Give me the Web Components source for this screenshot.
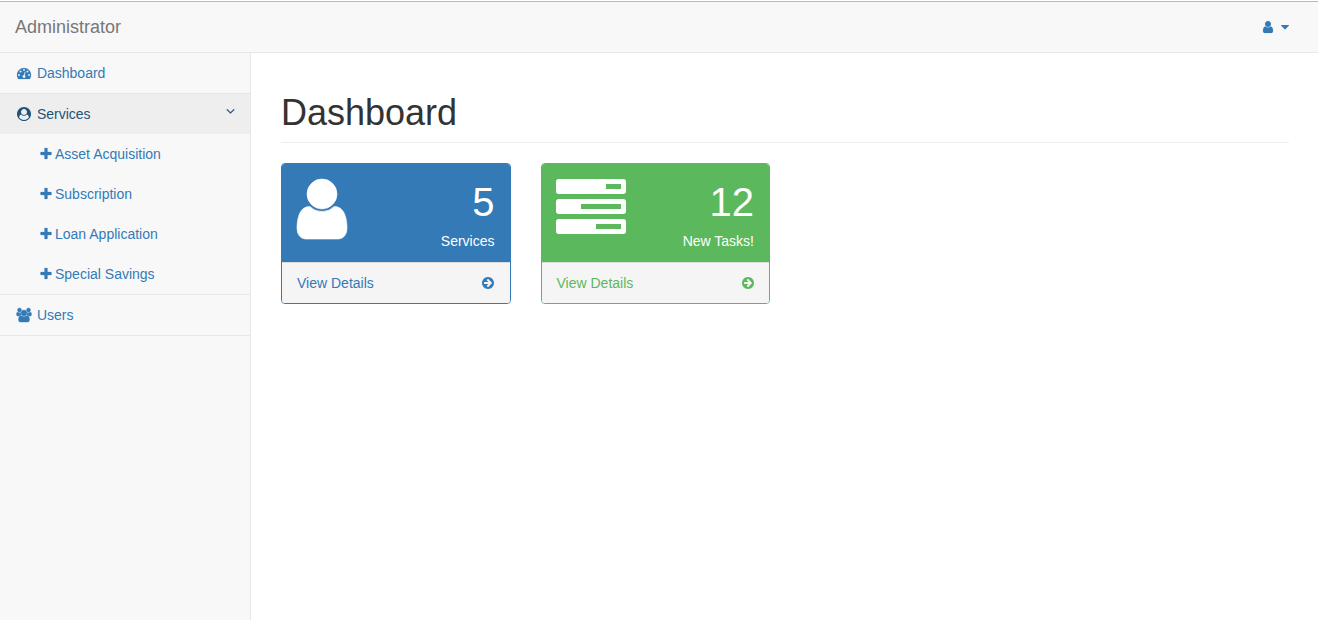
<!DOCTYPE html>
<html lang="en">
<head>
<meta charset="utf-8">
<title>Dashboard</title>
<style>
html,body{height:100%}
body{margin:0;background:#fff;color:#333;font:14px/1.42857143 "Liberation Sans",Arial,sans-serif;overflow:hidden}
</style>
</head>
<body>
<admin-app>
  <top-bar slot="top">Administrator</top-bar>
  <side-nav slot="side">
    <nav-item icon="dashboard">Dashboard</nav-item>
    <nav-item icon="usercircle" open>Services
      <nav-sub slot="children">Asset Acquisition</nav-sub>
      <nav-sub slot="children">Subscription</nav-sub>
      <nav-sub slot="children">Loan Application</nav-sub>
      <nav-sub slot="children">Special Savings</nav-sub>
    </nav-item>
    <nav-item icon="users">Users</nav-item>
  </side-nav>
  <page-header>Dashboard</page-header>
  <card-row>
    <stat-card icon="user" value="5" style="--c:#337ab7">Services</stat-card>
    <stat-card icon="tasks" value="12" style="--c:#5cb85c">New Tasks!</stat-card>
  </card-row>
</admin-app>
<script>
// Each icon: [left, width, path, extra stroke] on a 1792-unit-high grid.
const ICONS = {
  user:[256,1280,'M1536 1399q0 109-62.5 187t-150.5 78h-854q-88 0-150.5-78t-62.5-187q0-85 8.5-160.5t31.5-152 58.5-131 94-89 134.500-34.500q131 128 313 128t313-128q76 0 134.500 34.500t94 89 58.500 131 31.500 152 8.500 160.500zm-256-887q0 159-112.500 271.500t-271.500 112.500-271.500-112.500-112.500-271.500 112.500-271.500 271.500-112.500 271.500 112.500 112.500 271.500z',16],
  tasks:[0,1792,'M1024 1408h640v-128h-640v128zm-384-512h1024v-128h-1024v128zm640-512h384v-128h-384v128zm512 832v256q0 26-19 45t-45 19h-1664q-26 0-45-19t-19-45v-256q0-26 19-45t45-19h1664q26 0 45 19t19 45zm0-512v256q0 26-19 45t-45 19h-1664q-26 0-45-19t-19-45v-256q0-26 19-45t45-19h1664q26 0 45 19t19 45zm0-512v256q0 26-19 45t-45 19h-1664q-26 0-45-19t-19-45v-256q0-26 19-45t45-19h1664q26 0 45 19t19 45z',0],
  dashboard:[0,1792,'M384 1152q0-53-37.500-90.500t-90.500-37.500-90.500 37.500-37.500 90.500 37.500 90.500 90.500 37.500 90.500-37.500 37.500-90.500zm192-448q0-53-37.500-90.500t-90.500-37.500-90.500 37.500-37.500 90.500 37.500 90.500 90.500 37.500 90.500-37.500 37.500-90.500zm428 481l101-382q6-26-7.500-48.500t-38.500-29.500-48 6.500-30 39.500l-101 382q-60 5-107 43.500t-63 98.500q-20 77 20 146t117 89 146-20 89-117q16-60-6-117t-72-91zm660-33q0-53-37.500-90.500t-90.500-37.500-90.500 37.500-37.500 90.500 37.500 90.500 90.500 37.500 90.500-37.500 37.500-90.500zm-640-640q0-53-37.500-90.500t-90.500-37.500-90.500 37.500-37.500 90.500 37.500 90.500 90.500 37.500 90.500-37.500 37.500-90.500zm448 192q0-53-37.500-90.500t-90.500-37.500-90.500 37.500-37.500 90.500 37.500 90.500 90.500 37.500 90.500-37.500 37.500-90.500zm320 448q0 261-141 483-19 29-54 29h-1402q-35 0-54-29-141-221-141-483 0-182 71-348t191-286 286-191 348-71 348 71 286 191 191 286 71 348z',25],
  usercircle:[0,1792,'M1523 1339q-22-155-87.5-257.5t-184.5-118.5q-67 74-159.5 115.5t-195.5 41.5-195.5-41.5-159.5-115.5q-119 16-184.5 118.5t-87.5 257.5q106 150 271 237.5t356 87.5 356-87.5 271-237.5zm-243-699q0-159-112.5-271.5t-271.5-112.5-271.5 112.5-112.5 271.5 112.5 271.5 271.5 112.5 271.5-112.5 112.5-271.5zm512 256q0 182-71 347.500t-190.500 286-285.500 191.500-349 71q-182 0-348-71t-286-191-191-286-71-348 71-348 191-286 286-191 348-71 348 71 286 191 191 286 71 348z',0],
  users:[-64,2048,'M593 896q-162 5-265 128h-134q-82 0-138-40.500t-56-118.500q0-353 124-353 6 0 43.500 21t97.500 42.500 119 21.500q67 0 133-23-5 37-5 66 0 139 81 256zm1071 637q0 120-73 189.500t-194 69.500h-874q-121 0-194-69.500t-73-189.500q0-53 3.500-103.500t14-109 26.500-108.500 43-97.500 62-81 85.500-53.500 111.500-20q10 0 43 21.500t73 48 107 48 135 21.500 135-21.500 107-48 73-48 43-21.500q61 0 111.500 20t85.500 53.500 62 81 43 97.500 26.500 108.500 14 109 3.500 103.500zm-1024-1277q0 106-75 181t-181 75-181-75-75-181 75-181 181-75 181 75 75 181zm704 384q0 159-112.500 271.500t-271.500 112.500-271.500-112.500-112.500-271.500 112.500-271.500 271.500-112.500 271.500 112.500 112.500 271.500zm576 225q0 78-56 118.500t-138 40.500h-134q-103-123-265-128 81-117 81-256 0-29-5-66 66 23 133 23 59 0 119-21.500t97.500-42.500 43.500-21q124 0 124 353zm-128-609q0 106-75 181t-181 75-181-75-75-181 75-181 181-75 181 75 75 181z',50],
  plus:[0,1792,'M1600 736v192q0 40-28 68t-68 28h-416v416q0 40-28 68t-68 28h-192q-40 0-68-28t-28-68v-416h-416q-40 0-68-28t-28-68v-192q0-40 28-68t68-28h416v-416q0-40 28-68t68-28h192q40 0 68 28t28 68v416h416q40 0 68 28t28 68z',30],
  arrow:[128,1536,'M1413 896q0-27-18-45l-91-91-362-362q-18-18-45-18t-45 18l-91 91q-18 18-18 45t18 45l189 189h-502q-26 0-45 19t-19 45v128q0 26 19 45t45 19h502l-189 189q-19 19-19 45t19 45l91 91q18 18 45 18t45-18l362-362 91-91q18-18 18-45zm251 0q0 209-103 385.500t-279.500 279.500-385.500 103-385.500-103-279.500-279.500-103-385.500 103-385.500 279.500-279.500 385.500-103 385.500 103 279.500 279.500 103 385.500z',0],
  angle:[320,1152,'M1395 736q0 13-10 23l-466 466q-10 10-23 10t-23-10l-466-466q-10-10-10-23t10-23l50-50q10-10 23-10t23 10l393 393 393-393q10-10 23-10t23 10l50 50q10 10 10 23z',30],
  caret:[384,1024,'M1408 704q0 26-19 45l-448 448q-19 19-45 19t-45-19l-448-448q-19-19-19-45t19-45 45-19h896q26 0 45 19t19 45z',0]
};

const define = (name, render) => customElements.define(name, class extends HTMLElement {
  connectedCallback() {
    if (!this.shadowRoot) this.attachShadow({mode:'open'}).innerHTML = render(this);
  }
});

define('fa-icon', el => {
  const [x, w, d, s] = ICONS[el.getAttribute('name')];
  return `<style>:host{display:inline-flex;justify-content:center;flex:none;line-height:1}
    :host([fw]){width:18px}
    svg{display:block;flex:none;height:1em;width:${w / 1792}em;fill:currentColor;stroke:currentColor;overflow:visible}</style>
    <svg viewBox="${x} 0 ${w} 1792" stroke-width="${s}" aria-hidden="true"><path d="${d}"/></svg>`;
});

define('admin-app', () => `<style>
  :host{display:flex;flex-direction:column;height:100vh;box-sizing:border-box;padding-top:1px}
  .body{display:flex;flex:1;min-height:0}
  main{flex:1;min-width:0;padding:0 29px 0 30px}
  </style><slot name="top"></slot><div class="body"><slot name="side"></slot><main><slot></slot></main></div>`);

define('top-bar', () => `<style>
  :host{display:flex;justify-content:space-between;align-items:center;height:50px;flex:none;padding:0 29px 0 15px;
    background:#f8f8f8;border-top:1px solid #bbb;border-bottom:1px solid #e7e7e7;color:#777;font-size:18px;line-height:20px}
  .me{display:flex;align-items:center;gap:4px;color:#337ab7;font-size:14px}
  </style><span><slot></slot></span><span class="me"><fa-icon name="user" fw></fa-icon><fa-icon name="caret"></fa-icon></span>`);

define('side-nav', () => `<style>
  :host{display:block;width:250px;flex:none;background:#f8f8f8;border-right:1px solid #e7e7e7}
  </style><slot></slot>`);

define('nav-item', el => `<style>
  :host{display:block;border-bottom:1px solid #e7e7e7;color:#337ab7}
  .row{display:flex;align-items:center;gap:3.9px;height:20px;padding:10px 15px}
  :host([open]) .row{background:#eee;color:#23527c}
  .angle{margin-left:auto;align-self:flex-start}
  </style><div class="row"><fa-icon name="${el.getAttribute('icon')}" fw></fa-icon><span><slot></slot></span>${
    el.hasAttribute('open') ? '<fa-icon class="angle" name="angle"></fa-icon>' : ''}</div><slot name="children"></slot>`);

define('nav-sub', () => `<style>
  :host{display:flex;align-items:center;height:20px;padding:10px 15px 10px 37px;color:#337ab7}
  </style><fa-icon name="plus" fw></fa-icon><span><slot></slot></span>`);

define('page-header', () => `<style>
  :host{display:block;padding:40px 0 20px}
  h1{margin:0;padding-bottom:9px;border-bottom:1px solid #eee;font-size:36px;line-height:1.1;font-weight:400}
  </style><h1><slot></slot></h1>`);

define('card-row', () => `<style>
  :host{display:grid;grid-template-columns:repeat(4,1fr);gap:30px}
  </style><slot></slot>`);

define('stat-card', el => `<style>
  :host{display:block;border:1px solid var(--c);border-radius:4px;background:#fff}
  .head{display:flex;justify-content:space-between;padding:10px 15px;background:var(--c);color:#fff;
    border-bottom:1px solid var(--c);border-radius:3px 3px 0 0}
  .head fa-icon{font-size:70px;align-self:flex-start;margin-left:-.4px}
  .info{text-align:right}
  .huge{font-size:40px}
  .foot{display:flex;justify-content:space-between;align-items:center;height:20px;padding:10px 15px;
    background:#f5f5f5;border-top:1px solid #ddd;border-radius:0 0 3px 3px;color:var(--c)}
  .foot fa-icon{margin-right:.1px}
  </style><div class="head"><fa-icon name="${el.getAttribute('icon')}"></fa-icon>
  <div class="info"><div class="huge">${el.getAttribute('value')}</div><div><slot></slot></div></div></div>
  <div class="foot"><span>View Details</span><fa-icon name="arrow"></fa-icon></div>`);
</script>
</body>
</html>
